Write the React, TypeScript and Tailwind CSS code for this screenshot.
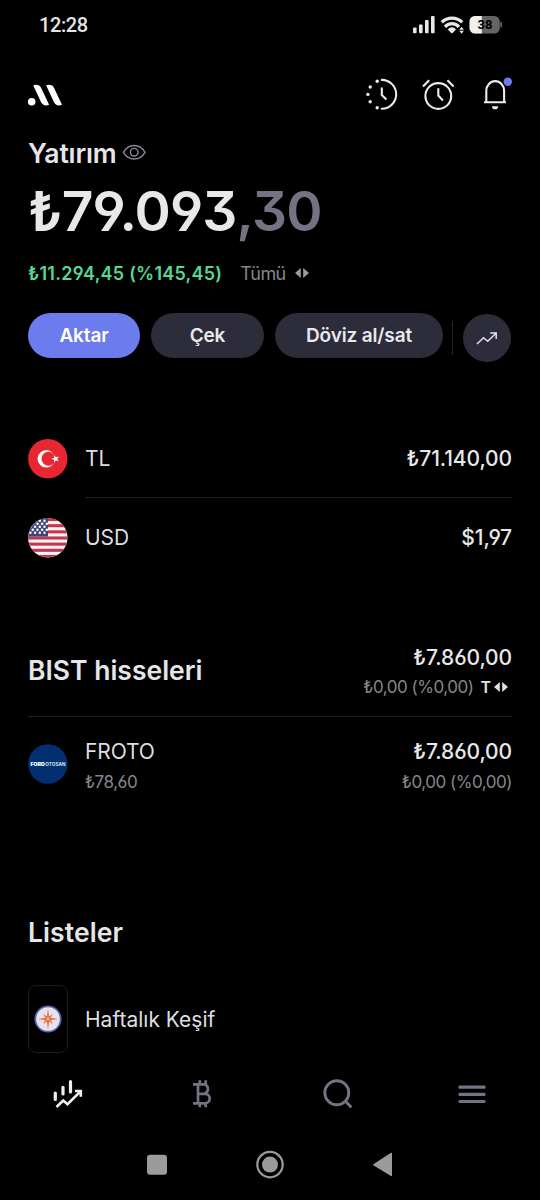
import type { ReactNode } from "react";

function StatusBar() {
  return (
    <div className="flex h-[49px] items-center justify-between pl-[39px] pr-[38px]">
      <span className="pt-px font-[Roboto] text-[20px] leading-[49px] font-medium tracking-[-0.4px] text-[#e4e4e4]">12:28</span>
      <svg width="90" height="20" viewBox="0 0 90 20">
        <g fill="#e8e8e8">
          <rect x="1" y="12.5" width="3.6" height="5.8" rx="1" />
          <rect x="7" y="9.5" width="3.6" height="8.8" rx="1" />
          <rect x="13" y="5" width="3.6" height="13.3" rx="1" />
          <rect x="19" y="1" width="3.6" height="17.3" rx="1" />
          <path d="M35.8 14.5a5 5 0 0 1 8.2 0L40.6 18a1 1 0 0 1-1.4 0z" />
          <path d="M49.6 11.8l2.3 3h-4.6zM49.6 18.8l2.3-3h-4.6z" />
        </g>
        <g fill="none" stroke="#e8e8e8" strokeWidth="3.2">
          <path d="M29.8 7.3a14.5 14.5 0 0 1 20.4 0" />
          <path d="M33 11.8a9.5 9.5 0 0 1 14 0" />
        </g>
        <rect x="57.5" y="1" width="30.3" height="17.6" rx="5.5" fill="#646464" />
        <path d="M69.8 1H63a5.5 5.5 0 0 0-5.5 5.5v6.6a5.5 5.5 0 0 0 5.5 5.5h6.8z" fill="#f0f0f0" />
        <path d="M88.3 6.8h.3a1.4 1.4 0 0 1 1.4 1.4v3a1.4 1.4 0 0 1-1.4 1.4h-.3z" fill="#646464" />
        <text x="73" y="14.2" textAnchor="middle" className="font-[Roboto] text-[13px] font-bold" fill="#000">38</text>
      </svg>
    </div>
  );
}

function Header() {
  return (
    <header className="flex h-[90px] items-center justify-between pl-[27px] pr-[27px]">
      <svg className="mt-px" width="36" height="24" viewBox="0 0 36 24" fill="#fff">
        <circle cx="4.7" cy="18.7" r="3.8" />
        <path d="M6.2 2.2C9.5 1 12.7 1.7 14.2 5L22.1 21.7C18.7 23.2 15.6 22.4 14.1 19.3z" />
        <path d="M19.1 2.2C22.4 1 25.6 1.7 27.1 5L35 21.7C31.6 23.2 28.5 22.4 27 19.3z" />
      </svg>
      <svg width="150" height="36" viewBox="0 0 150 36" fill="none" stroke="#ececec" strokeWidth="2.1">
        <path d="M18.8 3.9a14.4 14.4 0 0 1 0 28.8" strokeLinecap="round" />
        <path d="M18.8 11.6v7.4l4.6 4.6" />
        <g fill="#ececec" stroke="none">
          <circle cx="14.2" cy="5.2" r="1.7" />
          <circle cx="7.2" cy="11" r="1.7" />
          <circle cx="4.9" cy="18.4" r="1.7" />
          <circle cx="7.2" cy="25.7" r="1.7" />
          <circle cx="14.2" cy="31.8" r="1.7" />
        </g>
        <circle cx="75.3" cy="20" r="12.9" />
        <path d="M75.3 12.2v7.4l4.6 4.8M60 10.4l6.2-6.2M90.6 10.4l-6.2-6.2" />
        <path d="M121 26.3h22M123.3 26V14.7a8.9 9.6 0 0 1 17.8 0V26" />
        <path d="M129 30.2h6.2a3.1 3.1 0 0 1-6.2 0z" fill="#ececec" stroke="none" />
        <circle cx="144.8" cy="5.7" r="4.2" fill="#6b7aee" stroke="none" />
      </svg>
    </header>
  );
}

function Arrows({ color }: { color: string }) {
  return (
    <svg width="16" height="12" viewBox="0 0 16 12" fill={color}>
      <path d="M6.8 1v10L1 6zM9.2 1v10L15 6z" />
    </svg>
  );
}

function Balance() {
  return (
    <section className="pl-7">
      <div className="flex h-7 items-center">
        <h1 className="text-[26.5px] leading-7 font-semibold tracking-[-0.15px] text-[#e6e6e8]">Yatırım</h1>
        <svg className="ml-[5px]" width="25" height="18" viewBox="0 0 25 18" fill="none" stroke="#8a8a94" strokeWidth="1.4">
          <path d="M1.5 8.3C4 4 7.8 1.5 12.2 1.5S20.5 4 23 8.3C20.500 12.600 16.600 15 12.200 15S4 12.600 1.500 8.300z" />
          <circle cx="12.2" cy="8.2" r="3.8" />
        </svg>
      </div>
      <div className="flex h-[88px] items-center text-[55px] leading-[88px] font-semibold tracking-[-0.85px] text-[#e8e8ea]">
        <span>₺79.093</span>
        <span className="text-[#747384]">,30</span>
      </div>
      <div className="flex h-9 items-center text-[18px] leading-9">
        <span className="pt-[2px] font-semibold tracking-[0.23px] text-[#56d794]">₺11.294,45 (%145,45)</span>
        <span className="ml-[18px] mr-[8px] pt-[2px] tracking-[-0.6px] text-[#85858b]">Tümü</span>
        <Arrows color="#9a9a9e" />
      </div>
    </section>
  );
}

function Actions() {
  return (
    <section className="flex h-[129px] items-start pl-7 pt-[21.5px] text-[19px] font-semibold tracking-[-0.15px] text-[#e9e8ef]">
      <button className="h-[45px] w-28 rounded-full bg-[#6c7bee] pt-[3px] text-white">Aktar</button>
      <button className="ml-[11px] h-[45px] w-[113px] rounded-full bg-[#2c2c3a] pt-[3px]">Çek</button>
      <button className="ml-[11px] h-[45px] w-[168px] rounded-full bg-[#2c2c3a] pt-[3px]">Döviz al/sat</button>
      <div className="ml-[9px] mt-2 h-[34px] w-px bg-[#252528]" />
      <button className="ml-[10px] mt-[1.5px] flex size-[47.5px] items-center justify-center rounded-full bg-[#2c2c3a]">
        <svg width="22" height="14" viewBox="0 0 22 14" fill="none" stroke="#e4e3ea" strokeWidth="1.5">
          <path d="M1 13l6.500-6.300 4.200 3.600L20 2.200M14.200 2h6v6" />
        </svg>
      </button>
    </section>
  );
}

function TurkishFlag() {
  return (
    <svg width="40" height="40" viewBox="0 0 40 40">
      <circle cx="19.8" cy="19.8" r="19.7" fill="#e92733" />
      <circle cx="18.3" cy="19.8" r="8.7" fill="#fff" />
      <circle cx="20.5" cy="19.8" r="7" fill="#e92733" />
      <path d="M23.2 19.800l2.900-.9v-3l1.800 2.400 2.900-.9-1.700 2.400 1.700 2.400-2.900-.9-1.800 2.400v-3z" fill="#fff" />
    </svg>
  );
}

const stripes = [0, 2, 4, 6, 8, 10, 12];
const starRows = [2.8, 5.8, 8.8, 11.8, 14.8];

function UsFlag() {
  return (
    <svg width="40" height="40" viewBox="0 0 40 40">
      <clipPath id="round-flag">
        <circle cx="19.8" cy="19.8" r="19.7" />
      </clipPath>
      <g clipPath="url(#round-flag)">
        <rect width="40" height="40" fill="#fbf3f5" />
        {stripes.map((s) => (
          <rect key={s} y={s * 3.077} width="40" height="3.077" fill="#c1374e" />
        ))}
        <rect width="20" height="18.5" fill="#3f4577" />
        {starRows.map((y, r) =>
          [0, 1, 2, 3].map((c) => (
            <circle key={`${r}-${c}`} cx={2.4 + c * 4.7 + (r % 2) * 2.35} cy={y} r="1.25" fill="#fff" />
          )),
        )}
      </g>
    </svg>
  );
}

function CurrencyRow({ icon, name, value, className }: { icon: ReactNode; name: string; value: string; className: string }) {
  return (
    <div className={`flex items-center text-[21px] ${className}`}>
      {icon}
      <span className="ml-[17px] flex-1 tracking-[-0.1px] text-[#dedee0]">{name}</span>
      <span className="font-medium tracking-[-0.1px] text-[#e8e8ea]">{value}</span>
    </div>
  );
}

function Stocks() {
  return (
    <section className="mt-12 pl-7 pr-7">
      <div className="flex h-[91px] items-center justify-between">
        <h2 className="text-[26.5px] font-semibold text-[#e6e6e8]">BIST hisseleri</h2>
        <div className="flex flex-col items-end pt-[3px]">
          <span className="h-[29px] text-[21px] leading-[30px] font-medium tracking-[-0.1px] text-[#e8e8ea]">₺7.860,00</span>
          <div className="mr-[3px] flex h-[30px] items-center text-[17px] leading-[30px] text-[#85858c]">
            <span className="tracking-[-0.48px]">₺0,00 (%0,00)</span>
            <span className="ml-[7px] mr-[2px] text-[16px] font-semibold text-[#e0e0e2]">T</span>
            <Arrows color="#e0e0e2" />
          </div>
        </div>
      </div>
      <div className="h-px bg-[#202024]" />
      <div className="flex h-[94px] items-center">
        <svg width="40" height="40" viewBox="0 0 40 40">
          <circle cx="19.8" cy="20" r="19.7" fill="#022f70" />
          <text x="2.4" y="22" className="font-[Inter] text-[5px] font-black" textLength="14.5" lengthAdjust="spacingAndGlyphs" fill="#fff">FORD</text>
          <text x="17.3" y="22" className="font-[Inter] text-[4.8px] font-bold" textLength="20.2" lengthAdjust="spacingAndGlyphs" fill="#dce4f2">OTOSAN</text>
        </svg>
        <div className="ml-[17px] mt-[6px] flex flex-1 flex-col">
          <span className="h-[30px] text-[21px] leading-[30px] tracking-[-0.1px] text-[#dedee0]">FROTO</span>
          <span className="h-[30px] text-[17px] leading-[30px] tracking-[-0.48px] text-[#85858c]">₺78,60</span>
        </div>
        <div className="mt-[6px] flex flex-col items-end">
          <span className="h-[30px] text-[21px] leading-[30px] font-medium tracking-[-0.1px] text-[#e8e8ea]">₺7.860,00</span>
          <span className="h-[30px] text-[17px] leading-[30px] tracking-[-0.48px] text-[#85858c]">₺0,00 (%0,00)</span>
        </div>
      </div>
    </section>
  );
}

function Lists() {
  return (
    <section className="mt-[89px] pl-7">
      <h2 className="h-[65px] text-[26.5px] leading-[65px] font-semibold tracking-[0.1px] text-[#e6e6e8]">Listeler</h2>
      <div className="mt-5 flex h-[68px] items-center">
        <div className="flex h-[68px] w-10 items-center justify-center rounded-lg border border-[#1b1b1d]">
          <svg width="28" height="28" viewBox="0 0 28 28">
            <circle cx="14" cy="14" r="12.7" fill="#e6e3ee" stroke="#5563b5" strokeWidth="1.7" />
            <path d="M14 3.800l1.200 7.500 3.900-2.400-2.400 3.900 7.500 1.200-7.500 1.200 2.400 3.900-3.900-2.400L14 24.200l-1.200-7.500-3.900 2.400 2.400-3.900L3.800 14l7.500-1.200-2.400-3.900 3.900 2.400z" fill="#e0774d" />
            <circle cx="14" cy="14" r="1.4" fill="#f0b08c" />
          </svg>
        </div>
        <span className="ml-[17px] pt-[2px] text-[21px] text-[#dedee0]">Haftalık Keşif</span>
      </div>
    </section>
  );
}

function TabBar() {
  return (
    <nav className="grid h-[81px] grid-cols-4 place-items-center">
      <svg width="32" height="32" viewBox="0 0 32 32" fill="none" stroke="#f0f0f0" strokeWidth="3.2" strokeLinecap="round">
        <path d="M3.3 15v6.5M11 9.3v6.7M18.500 3.500v10.500" />
        <path d="M4.5 29l6.7-6.5 4.3 3.7L28.500 13.400M23 13h5.800v5.700" strokeWidth="2.6" strokeLinecap="butt" />
      </svg>
      <svg width="24" height="32" viewBox="0 0 24 32" fill="none" stroke="#747385" strokeWidth="2.7">
        <path d="M2 6.300h11.500a5 5 0 0 1 0 9.500H7.500h6.500a4.700 4.700 0 0 1 0 9.500H2M7 6.300v19M8.800 2.300v4M14.700 2.300v4M8.800 25.300v4M14.700 25.300v4" />
      </svg>
      <svg width="32" height="32" viewBox="0 0 32 32" fill="none" stroke="#747385" strokeWidth="2.9" strokeLinecap="round">
        <circle cx="14.8" cy="14.7" r="12" />
        <path d="M23.5 23.3l5 5.200" />
      </svg>
      <svg className="mr-px" width="30" height="24" viewBox="0 0 30 24" fill="#747385">
        <rect x="1.5" y="3.5" width="27" height="3.2" rx="1" />
        <rect x="1.5" y="10.7" width="27" height="3.2" rx="1" />
        <rect x="1.5" y="17.9" width="27" height="3.2" rx="1" />
      </svg>
    </nav>
  );
}

function SystemNav() {
  return (
    <div className="flex h-[60px] items-center justify-center">
      <svg width="248" height="32" viewBox="0 0 248 32" fill="#9b9b9b">
        <rect x="1" y="6.7" width="20" height="20" rx="3" />
        <circle cx="124" cy="16.6" r="8" />
        <circle cx="124" cy="16.6" r="12.7" fill="none" stroke="#9b9b9b" strokeWidth="2.2" />
        <path d="M227.7 15.900L245 4.800q1-.5 1 .6v22q0 1.200-1 .6L227.700 17.500q-1.200-.8 0-1.600z" />
      </svg>
    </div>
  );
}

export default function App() {
  return (
    <main className="flex h-[1200px] w-[540px] flex-col overflow-hidden bg-black font-[Inter,sans-serif] [font-feature-settings:'cv03','cv04','cv09']">
      <StatusBar />
      <Header />
      <Balance />
      <Actions />
      <section className="pl-7 pr-7">
        <CurrencyRow icon={<TurkishFlag />} name="TL" value="₺71.140,00" className="h-[77px]" />
        <div className="ml-[57px] h-px bg-[#202024]" />
        <CurrencyRow icon={<UsFlag />} name="USD" value="$1,97" className="h-[79px]" />
      </section>
      <Stocks />
      <Lists />
      <TabBar />
      <SystemNav />
    </main>
  );
}
